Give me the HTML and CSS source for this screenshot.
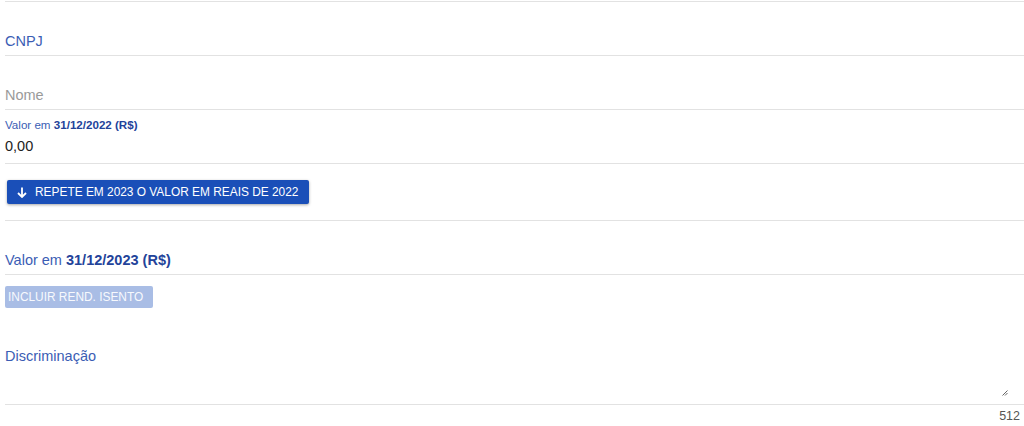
FILE: index.html
```html
<!DOCTYPE html>
<html lang="pt-BR">
<head>
  <meta charset="UTF-8" />
  <meta name="viewport" content="width=device-width, initial-scale=1.0"/>
  <title>Rendimento isento</title>
  <link rel="stylesheet" href="styles.css">
</head>
<body>
  <div class="form">
    <div class="field field-top"></div>

    <div class="field field-empty">
      <span class="label">CNPJ</span>
    </div>

    <div class="field field-empty">
      <span class="placeholder">Nome</span>
    </div>

    <div class="field field-filled">
      <span class="label-small">Valor em <b>31/12/2022 (R$)</b></span>
      <span class="value">0,00</span>
    </div>

    <div class="field field-action">
      <button class="btn btn-primary">
        <svg width="10" height="11" viewBox="0 0 10 11"><path d="M5 0.5V10M1 6l4 4 4-4" stroke="#fff" stroke-width="1.8" fill="none"/></svg>
        Repete em 2023 o valor em reais de 2022
      </button>
    </div>

    <div class="field field-empty">
      <span class="label">Valor em <b>31/12/2023 (R$)</b></span>
    </div>

    <div class="row-action">
      <button class="btn btn-disabled" disabled>Incluir rend. isento</button>
    </div>

    <div class="field field-textarea">
      <span class="label">Discriminação</span>
      <svg class="grip" width="6" height="6" viewBox="0 0 6 6"><path d="M5.5 0.5L0.5 5.5M5.5 3L3 5.5" stroke="#666" stroke-width="1"/></svg>
    </div>
    <div class="counter">512</div>
  </div>
</body>
</html>
```

FILE: styles.css
```css
body {
  margin: 0;
  font-family: "Liberation Sans", Arial, sans-serif;
  background: #fff;
}
.form {
  padding-left: 5px;
}
.field {
  border-bottom: 1px solid #e2e2e2;
  position: relative;
}
.field-top {
  height: 1px;
}
.field-empty {
  height: 53px;
  display: flex;
  align-items: flex-end;
}
.label, .placeholder {
  font-size: 14.5px;
  line-height: 17px;
  margin-bottom: 5px;
  color: #3b5db4;
}
.label b {
  color: #23439a;
}
.placeholder {
  color: #9a9a9a;
}
.field-filled {
  height: 53px;
  display: flex;
  flex-direction: column;
}
.label-small {
  font-size: 11.6px;
  color: #3b5db4;
  margin-top: 8px;
  line-height: 13px;
}
.label-small b {
  color: #23439a;
}
.value {
  font-size: 14.5px;
  color: #222;
  margin-top: 7px;
  line-height: 17px;
}
.field-action {
  height: 56px;
}
.btn {
  font-family: inherit;
  font-size: 11.9px;
  text-transform: uppercase;
  border: none;
  border-radius: 2px;
  color: #fff;
  display: inline-flex;
  align-items: center;
  cursor: pointer;
}
.btn-primary {
  background: #1a4fb8;
  margin: 16px 0 0 2px;
  height: 24px;
  padding: 0 11px 0 10px;
  gap: 8px;
  box-shadow: 0 1px 3px rgba(0, 0, 0, 0.35);
}
.btn-disabled {
  background: #a9bde5;
  height: 22px;
  width: 148px;
  padding: 0 0 0 3px;
  color: #f7f9fd;
  cursor: default;
}
.row-action {
  padding-top: 11px;
  height: 25px;
}
.field-textarea {
  height: 56px;
  padding-top: 37px;
}
.field-textarea .label {
  display: block;
}
.grip {
  position: absolute;
  right: 16px;
  bottom: 8px;
}
.counter {
  text-align: right;
  font-size: 12.5px;
  color: #555;
  padding: 4px 4px 0 0;
}
```
